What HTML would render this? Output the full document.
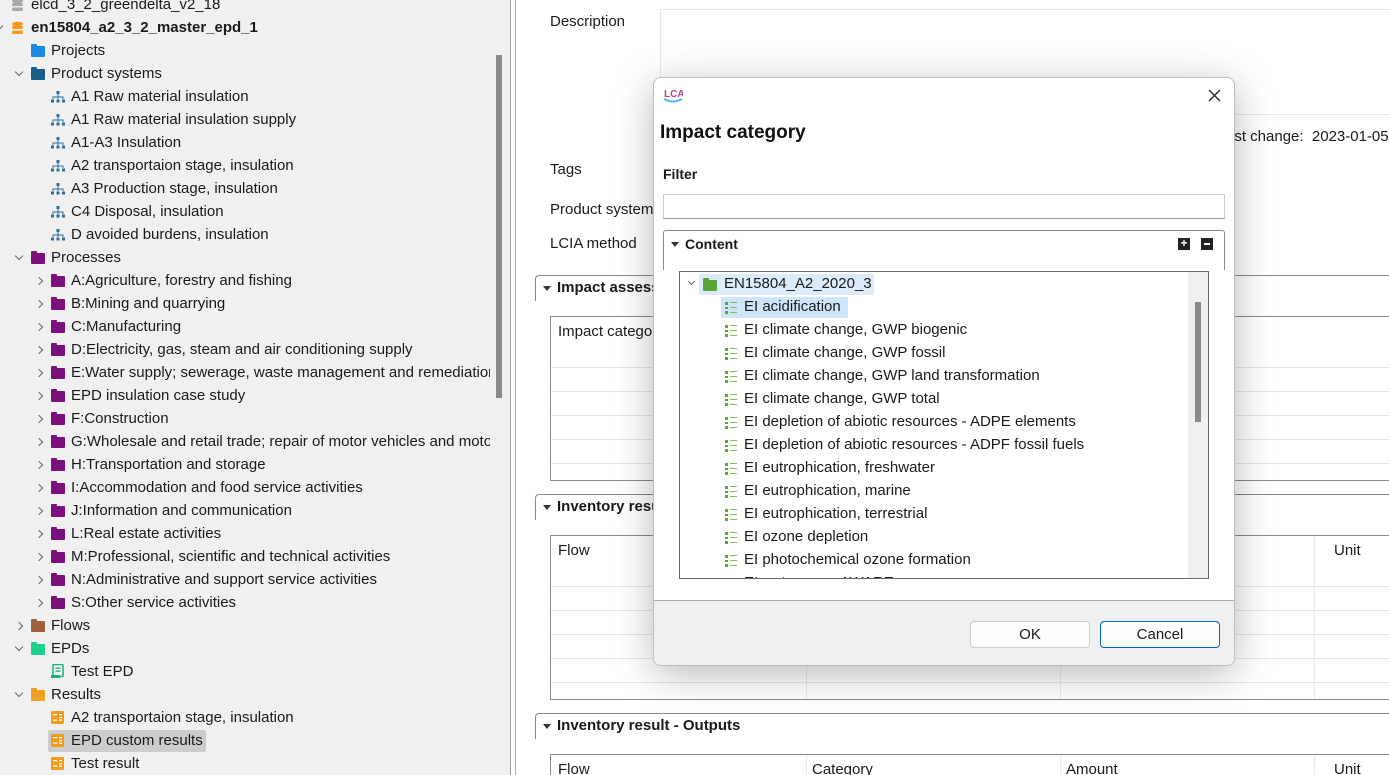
<!DOCTYPE html>
<html><head><meta charset="utf-8"><style>
*{box-sizing:border-box;margin:0;padding:0}
html,body{width:1389px;height:775px;overflow:hidden}
body{position:relative;font-family:"Liberation Sans",sans-serif;font-size:15px;color:#1a1a1a;background:#fff}
.abs{position:absolute}
#left{left:0;top:0;width:511px;height:775px;background:#f0f0f0;border-right:1px solid #a0a0a0}
.row{position:absolute;height:23px;line-height:23px;white-space:nowrap;font-size:15px}
.tg{position:absolute;width:6px;height:6px;border-right:1.3px solid #666;border-bottom:1.3px solid #666}
.tg.open{transform:rotate(45deg)}
.tg.closed{transform:rotate(-45deg)}
.fold{position:absolute;width:14px;height:11px;border-radius:1px}
.fold:before{content:"";position:absolute;left:0;top:-2px;width:6px;height:3px;background:inherit;border-radius:1px 1px 0 0}
.lbl{position:absolute;font-size:15px;white-space:nowrap}
.sect{position:absolute;border:1px solid #8a8a8a;border-bottom:none;border-right:none;border-radius:4px 0 0 0;height:26px;font-weight:bold;font-size:15px;line-height:24px;padding-left:21px}
.tri{position:absolute;left:7px;top:10px;width:0;height:0;border-left:4px solid transparent;border-right:4px solid transparent;border-top:5px solid #333}
.tbl{position:absolute;border:1px solid #8a8a8a;background:#fff;overflow:hidden}
.hl{position:absolute;left:0;right:0;height:1px;background:#e6e6e6}
.ei{position:absolute;width:13px;height:12px}
.ei i{position:absolute;background:#5aa53a;height:2.5px}
</style></head><body>

<div id="left" class="abs">
 <div class="abs" style="left:496px;top:55px;width:6px;height:343px;background:#8a8a8a"></div>
</div>
<div class="abs" style="left:515px;top:0;width:1px;height:775px;background:#b0b0b0"></div>

<div id="tree"></div>
<script>
const rows=[
[0,'elcd_3_2_greendelta_v2_18','db-grey',null],
[0,'en15804_a2_3_2_master_epd_1','db',"open",true],
[1,'Projects','f:#1e88e5',null],
[1,'Product systems','f:#1b5e8a','open'],
[2,'A1 Raw material insulation','ps'],
[2,'A1 Raw material insulation supply','ps'],
[2,'A1-A3 Insulation','ps'],
[2,'A2 transportaion stage, insulation','ps'],
[2,'A3 Production stage, insulation','ps'],
[2,'C4 Disposal, insulation','ps'],
[2,'D avoided burdens, insulation','ps'],
[1,'Processes','f:#7b0f7b','open'],
[2,'A:Agriculture, forestry and fishing','f:#7b0f7b','closed'],
[2,'B:Mining and quarrying','f:#7b0f7b','closed'],
[2,'C:Manufacturing','f:#7b0f7b','closed'],
[2,'D:Electricity, gas, steam and air conditioning supply','f:#7b0f7b','closed'],
[2,'E:Water supply; sewerage, waste management and remediation','f:#7b0f7b','closed'],
[2,'EPD insulation case study','f:#7b0f7b','closed'],
[2,'F:Construction','f:#7b0f7b','closed'],
[2,'G:Wholesale and retail trade; repair of motor vehicles and motorcycles','f:#7b0f7b','closed'],
[2,'H:Transportation and storage','f:#7b0f7b','closed'],
[2,'I:Accommodation and food service activities','f:#7b0f7b','closed'],
[2,'J:Information and communication','f:#7b0f7b','closed'],
[2,'L:Real estate activities','f:#7b0f7b','closed'],
[2,'M:Professional, scientific and technical activities','f:#7b0f7b','closed'],
[2,'N:Administrative and support service activities','f:#7b0f7b','closed'],
[2,'S:Other service activities','f:#7b0f7b','closed'],
[1,'Flows','f:#a0603a','closed'],
[1,'EPDs','f:#1ccf8a','open'],
[2,'Test EPD','epd'],
[1,'Results','f:#f0a020','open'],
[2,'A2 transportaion stage, insulation','res'],
[2,'EPD custom results','res',null,false,true],
[2,'Test result','res'],
];
let h='';
rows.forEach((r,i)=>{
 const [lv,t,ic,tg,bold,sel]=r;
 const top=-7+23*i;
 const ix=11+lv*20, tx=31+lv*20;
 if(sel)h+=`<div class="abs" style="left:${ix-3}px;top:${top+1}px;width:158px;height:22px;background:#cccccc;border-radius:2px"></div>`;
 if(tg)h+=`<div class="tg ${tg}" style="left:${ix-15}px;top:${top+(tg=='open'?7:9)}px"></div>`;
 if(ic.startsWith('f:'))h+=`<div class="fold" style="left:${ix}px;top:${top+7}px;background:${ic.slice(2)}"></div>`;
 else if(ic=='db'||ic=='db-grey'){const c=ic=='db'?'#f29a1c':'#a8a8a8';h+=`<svg class="abs" style="left:${ix}px;top:${top+5}px" width="13" height="14"><ellipse cx="6.5" cy="3" rx="5.5" ry="2.3" fill="${c}"/><rect x="1" y="5" width="11" height="3" rx="1.5" fill="${c}"/><rect x="1" y="9.5" width="11" height="3.5" rx="1.5" fill="${c}"/></svg>`}
 else if(ic=='ps')h+=`<svg class="abs" style="left:${ix}px;top:${top+6}px" width="14" height="12" fill="#2a6e9e"><rect x="5.5" y="0" width="3" height="3"/><rect x="6.5" y="3" width="1" height="3"/><rect x="1.5" y="5.5" width="11" height="1"/><rect x="1.5" y="6" width="1" height="2"/><rect x="11.5" y="6" width="1" height="2"/><rect x="6.5" y="6" width="1" height="2"/><rect x="0" y="8.5" width="3" height="3"/><rect x="5.5" y="8.5" width="3" height="3"/><rect x="11" y="8.5" width="3" height="3"/></svg>`;
 else if(ic=='epd')h+=`<svg class="abs" style="left:${ix}px;top:${top+4}px" width="14" height="15"><rect x="2" y="0.5" width="10" height="12" rx="1" fill="none" stroke="#1ab07a" stroke-width="1.5"/><rect x="4.5" y="3.5" width="5" height="1.3" fill="#1ab07a"/><rect x="4.5" y="6.5" width="5" height="1.3" fill="#1ab07a"/><rect x="0" y="11" width="9" height="3" fill="#1ab07a"/></svg>`;
 else if(ic=='res')h+=`<svg class="abs" style="left:${ix}px;top:${top+5}px" width="13" height="13"><rect width="13" height="13" rx="1.5" fill="#f29a1c"/><rect x="2" y="3" width="4" height="1.3" fill="#fff"/><rect x="8" y="3" width="3" height="1.3" fill="#fff"/><rect x="8" y="6" width="3" height="1.3" fill="#fff"/><rect x="2" y="8.5" width="4" height="1.3" fill="#fff"/><rect x="8" y="8.5" width="3" height="1.3" fill="#fff"/></svg>`;
 h+=`<div class="row" style="left:${tx}px;top:${top}px;${bold?'font-weight:bold':''}">${t}</div>`;
});
document.getElementById('tree').innerHTML=h;
document.getElementById('tree').style.cssText='position:absolute;left:0;top:0;width:490px;height:775px;overflow:hidden';
</script>

<div class="lbl" style="left:550px;top:13px">Description</div>
<div class="abs" style="left:660px;top:9px;width:740px;height:106px;border:1px solid #e8e8e8;border-right:none"></div>
<div class="lbl" style="left:1226px;top:128px">ast change:&nbsp;&nbsp;2023-01-05</div>
<div class="lbl" style="left:550px;top:161px">Tags</div>
<div class="lbl" style="left:550px;top:201px">Product system</div>
<div class="lbl" style="left:550px;top:235px">LCIA method</div>

<div class="sect" style="left:535px;top:275px;width:860px"><span class="tri"></span>Impact assessment results</div>
<div class="tbl" style="left:550px;top:316px;width:850px;height:165px">
 <div class="lbl" style="left:7px;top:6px">Impact category</div>
 <div class="hl" style="top:50px"></div><div class="hl" style="top:74px"></div><div class="hl" style="top:98px"></div><div class="hl" style="top:122px"></div><div class="hl" style="top:146px"></div>
</div>
<div class="sect" style="left:535px;top:494px;width:860px"><span class="tri"></span>Inventory results - Inputs</div>
<div class="tbl" style="left:550px;top:535px;width:850px;height:165px">
 <div class="lbl" style="left:7px;top:6px">Flow</div>
 <div class="lbl" style="left:783px;top:6px">Unit</div>
 <div class="abs" style="left:255px;top:0;width:1px;height:165px;background:#e8ecf2"></div>
 <div class="abs" style="left:509px;top:0;width:1px;height:165px;background:#e8ecf2"></div>
 <div class="abs" style="left:763px;top:0;width:1px;height:165px;background:#e8ecf2"></div>
 <div class="hl" style="top:50px"></div><div class="hl" style="top:74px"></div><div class="hl" style="top:98px"></div><div class="hl" style="top:122px"></div><div class="hl" style="top:146px"></div>
</div>
<div class="sect" style="left:535px;top:713px;width:860px"><span class="tri"></span>Inventory result - Outputs</div>
<div class="tbl" style="left:550px;top:754px;width:850px;height:21px;border-bottom:none">
 <div class="lbl" style="left:7px;top:6px">Flow</div>
 <div class="lbl" style="left:261px;top:6px">Category</div>
 <div class="lbl" style="left:515px;top:6px">Amount</div>
 <div class="lbl" style="left:783px;top:6px">Unit</div>
 <div class="abs" style="left:255px;top:0;width:1px;height:40px;background:#e8ecf2"></div>
 <div class="abs" style="left:509px;top:0;width:1px;height:40px;background:#e8ecf2"></div>
 <div class="abs" style="left:763px;top:0;width:1px;height:40px;background:#e8ecf2"></div>
</div>

<div class="abs" style="left:653px;top:77px;width:582px;height:589px;background:#fff;border:1px solid #bdbdbd;border-radius:8px;box-shadow:0 8px 40px rgba(0,0,0,0.28);overflow:hidden">
 <svg class="abs" style="left:9px;top:9px" width="20" height="18"><text x="1" y="10" font-family="Liberation Sans" font-size="10" font-weight="bold" fill="#b2478f">LCA</text><path d="M1 12 Q10 17 19 12" stroke="#5bb8e8" stroke-width="2" fill="none"/></svg>
 <svg class="abs" style="left:554px;top:11px" width="13" height="13"><path d="M1 1L12 12M12 1L1 12" stroke="#222" stroke-width="1.3"/></svg>
 <div class="lbl" style="left:6px;top:44px;font-size:19px;font-weight:bold;color:#111">Impact category</div>
 <div class="lbl" style="left:9px;top:88px;font-weight:bold;font-size:14px">Filter</div>
 <div class="abs" style="left:9px;top:116px;width:562px;height:25px;border:1px solid #ccc;border-bottom-color:#999"></div>
 <div class="abs" style="left:9px;top:152px;width:562px;height:40px;border:1px solid #8a8a8a;border-bottom:none;border-radius:3px 3px 0 0"></div>
 <span class="abs" style="left:17px;top:164px;border-left:4px solid transparent;border-right:4px solid transparent;border-top:5px solid #333"></span>
 <div class="lbl" style="left:31px;top:158px;font-weight:bold;font-size:14px">Content</div>
 <div class="abs" style="left:524px;top:160px;width:12px;height:12px;background:#222;color:#fff;font-size:12px;line-height:11px;text-align:center;font-weight:bold">+</div>
 <div class="abs" style="left:547px;top:160px;width:12px;height:12px;background:#222"><div class="abs" style="left:3px;top:5px;width:6px;height:1.5px;background:#fff"></div></div>
 <div class="abs" style="left:25px;top:193px;width:530px;height:308px;border:1px solid #6a6a6a;overflow:hidden" id="dt">
  <div class="abs" style="right:0;top:0;width:20px;height:308px;background:#f0f0f0"></div>
  <div class="abs" style="right:7px;top:30px;width:6px;height:120px;background:#8a8a8a"></div>
 </div>
 <div class="abs" style="left:0;top:522px;width:582px;height:70px;background:#f0f0f0;border-top:1px solid #a8a8a8"></div>
 <div class="abs" style="left:316px;top:543px;width:120px;height:27px;border:1px solid #ccc;border-radius:4px;background:#fdfdfd;text-align:center;line-height:25px">OK</div>
 <div class="abs" style="left:446px;top:543px;width:120px;height:27px;border:1px solid #0067c0;border-radius:4px;background:#fdfdfd;text-align:center;line-height:25px">Cancel</div>
</div>
<script>
const items=['EI acidification','EI climate change, GWP biogenic','EI climate change, GWP fossil','EI climate change, GWP land transformation','EI climate change, GWP total','EI depletion of abiotic resources - ADPE elements','EI depletion of abiotic resources - ADPF fossil fuels','EI eutrophication, freshwater','EI eutrophication, marine','EI eutrophication, terrestrial','EI ozone depletion','EI photochemical ozone formation','EI water use - AWARE'];
let d=`<div class="abs" style="left:19px;top:2px;width:175px;height:21px;background:#dcebfa"></div><div class="tg open" style="left:9px;top:7px;width:5px;height:5px"></div><div class="fold" style="left:23px;top:8px;background:#5aa53a"></div><div class="lbl" style="left:44px;top:3px">EN15804_A2_2020_3</div>`;
items.forEach((t,i)=>{const top=25+23*i;
 if(i==0)d+=`<div class="abs" style="left:41px;top:${top}px;width:127px;height:21px;background:#cfe5fa"></div>`;
 d+=`<div class="ei" style="left:45px;top:${top+5}px"><i style="left:0;top:0;width:2.5px"></i><i style="left:0;top:4.5px;width:2.5px"></i><i style="left:0;top:9px;width:2.5px"></i><i style="left:5px;top:0;width:7px;height:1px;background:#7bbf5a"></i><i style="left:5px;top:5px;width:7px;height:1px;background:#7bbf5a"></i><i style="left:5px;top:10px;width:7px;height:1px;background:#7bbf5a"></i></div><div class="lbl" style="left:64px;top:${top+1}px">${t}</div>`;});
const dt=document.getElementById('dt');dt.insertAdjacentHTML('afterbegin',d);
</script>
</body></html>
